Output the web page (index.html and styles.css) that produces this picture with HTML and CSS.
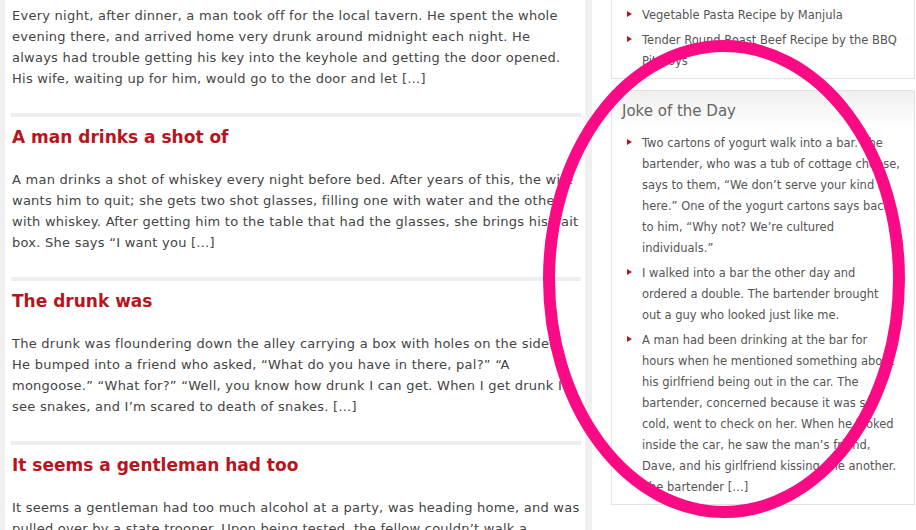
FILE: index.html
```html
<!DOCTYPE html>
<html>
<head>
<meta charset="utf-8">
<link rel="stylesheet" href="styles.css">
</head>
<body>
<div class="page">
  <main class="main">
    <p class="excerpt first">Every night, after dinner, a man took off for the local tavern. He spent the whole<br>evening there, and arrived home very drunk around midnight each night. He<br>always had trouble getting his key into the keyhole and getting the door opened.<br>His wife, waiting up for him, would go to the door and let […]</p>
    <article class="post">
      <h2 class="post-title">A man drinks a shot of</h2>
      <p class="excerpt">A man drinks a shot of whiskey every night before bed. After years of this, the wife<br>wants him to quit; she gets two shot glasses, filling one with water and the other<br>with whiskey. After getting him to the table that had the glasses, she brings his bait<br>box. She says “I want you […]</p>
    </article>
    <article class="post">
      <h2 class="post-title">The drunk was</h2>
      <p class="excerpt">The drunk was floundering down the alley carrying a box with holes on the side.<br>He bumped into a friend who asked, “What do you have in there, pal?” “A<br>mongoose.” “What for?” “Well, you know how drunk I can get. When I get drunk I<br>see snakes, and I’m scared to death of snakes. […]</p>
    </article>
    <article class="post">
      <h2 class="post-title">It seems a gentleman had too</h2>
      <p class="excerpt">It seems a gentleman had too much alcohol at a party, was heading home, and was<br>pulled over by a state trooper. Upon being tested, the fellow couldn’t walk a</p>
    </article>
  </main>
  <aside class="sidebar">
    <section class="widget widget-cut">
      <ul class="widget-list">
        <li>Vegetable Pasta Recipe by Manjula</li>
        <li>Tender Round Roast Beef Recipe by the BBQ<br>Pit Boys</li>
      </ul>
    </section>
    <section class="widget">
      <h3 class="widget-title">Joke of the Day</h3>
      <ul class="widget-list">
        <li>Two cartons of yogurt walk into a bar. The<br>bartender, who was a tub of cottage cheese,<br>says to them, “We don’t serve your kind in<br>here.” One of the yogurt cartons says back<br>to him, “Why not? We’re cultured<br>individuals.”</li>
        <li>I walked into a bar the other day and<br>ordered a double. The bartender brought<br>out a guy who looked just like me.</li>
        <li>A man had been drinking at the bar for<br>hours when he mentioned something about<br>his girlfriend being out in the car. The<br>bartender, concerned because it was so<br>cold, went to check on her. When he looked<br>inside the car, he saw the man’s friend,<br>Dave, and his girlfriend kissing one another.<br>The bartender […]</li>
      </ul>
    </section>
  </aside>
  <svg class="annotation" width="916" height="530" viewBox="0 0 916 530">
    <ellipse cx="724" cy="279" rx="175" ry="233" fill="none" stroke="#fa0a84" stroke-width="12"/>
  </svg>
</div>
</body>
</html>
```

FILE: styles.css
```css
html, body {
  margin: 0;
  padding: 0;
  background: #f0f0f0;
}
.page {
  position: relative;
  display: flex;
  gap: 7px;
  width: 916px;
  height: 530px;
  overflow: hidden;
  padding-left: 5px;
  box-sizing: border-box;
}
.main {
  width: 580px;
  flex: none;
  background: #fff;
  padding: 5px 4px 0 6px;
  box-sizing: border-box;
}
.excerpt {
  margin: 0 0 24px 1px;
  font-family: "DejaVu Sans", Verdana, sans-serif;
  font-size: 13px;
  letter-spacing: 0.25px;
  line-height: 21px;
  color: #444;
  white-space: nowrap;
}
.post {
  border-top: 4px solid #eeeeee;
}
.post-title {
  margin: 8px 0 20px 1px;
  font-family: "DejaVu Sans", Verdana, sans-serif;
  font-size: 17px;
  line-height: 24px;
  font-weight: bold;
  color: #b8141c;
}
.sidebar {
  flex: 1;
  background: #fff;
  padding-left: 19px;
}
.widget {
  border: 1px solid #e2e2e2;
  margin-bottom: 11px;
  width: 304px;
  box-sizing: border-box;
}
.widget-cut {
  border-top: 0;
  padding-top: 1px;
}
.widget-title {
  margin: 0;
  padding: 10px 10px 8px;
  font-family: "DejaVu Sans", Verdana, sans-serif;
  font-size: 15px;
  line-height: 20px;
  font-weight: normal;
  color: #666;
  background: linear-gradient(#efefef, #ffffff);
}
.widget-list {
  list-style: none;
  margin: 0;
  padding: 4px 0 6px 30px;
  font-family: "DejaVu Sans", Verdana, sans-serif;
  font-size: 11.5px;
  line-height: 21px;
  color: #555;
  white-space: nowrap;
}
.widget-list li {
  display: flex;
  margin-bottom: 4px;
}
.widget-list li:last-child {
  margin-bottom: 0;
}
.widget-list li::before {
  content: "";
  flex: none;
  width: 0;
  height: 0;
  margin: 6px 10px 0 -15px;
  border-top: 3px solid transparent;
  border-bottom: 3px solid transparent;
  border-left: 5px solid #b8141c;
}
.annotation {
  position: absolute;
  left: 0;
  top: 0;
  pointer-events: none;
}
```
